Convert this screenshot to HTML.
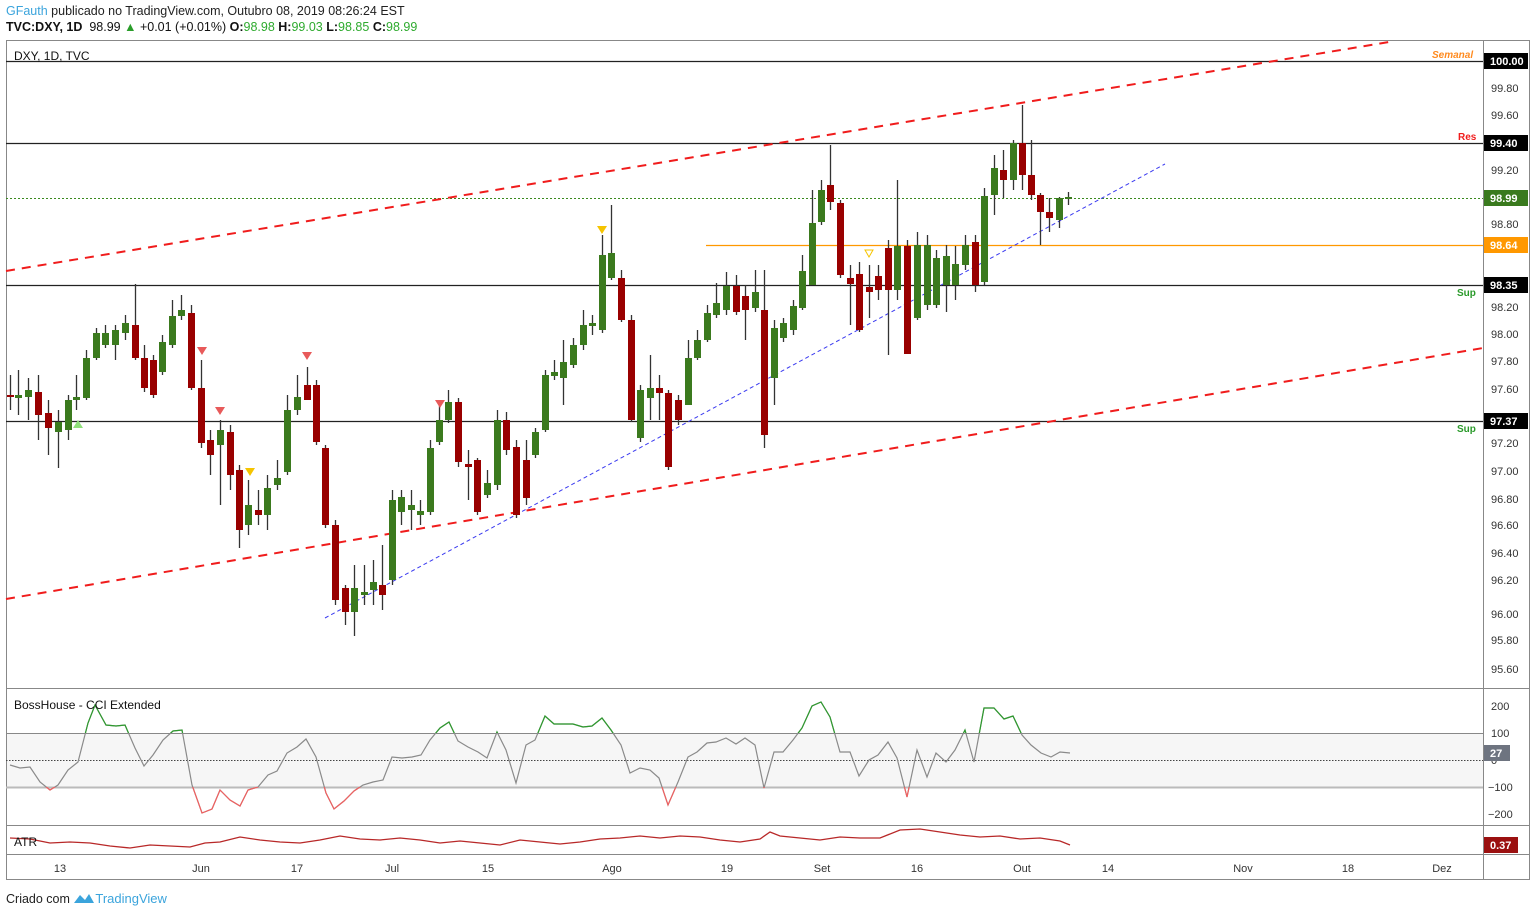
<!DOCTYPE html>
<html><head><meta charset="utf-8"><style>
body{margin:0;background:#fff;width:1536px;height:914px;overflow:hidden;font-family:"Liberation Sans",sans-serif}
.t{position:absolute;white-space:nowrap}
</style></head><body>
<div class="t" style="left:6px;top:4px;font-size:12.5px;color:#222"><span style="color:#3ba4dc">GFauth</span> publicado no TradingView.com, Outubro 08, 2019 08:26:24 EST</div>
<div class="t" style="left:6px;top:20px;font-size:12.5px;color:#111"><b>TVC:DXY, 1D</b>&nbsp; 98.99 <span style="color:#2a9d2a">▲</span> +0.01 (+0.01%) <b>O:</b><span style="color:#2eaa2e">98.98</span> <b>H:</b><span style="color:#2eaa2e">99.03</span> <b>L:</b><span style="color:#2eaa2e">98.85</span> <b>C:</b><span style="color:#2eaa2e">98.99</span></div>
<div class="t" style="left:6px;top:891px;font-size:12.5px;color:#222">Criado com <span style="color:#3ba4dc;font-size:13px"><svg width="22" height="12" viewBox="0 0 22 12" style="vertical-align:-1px"><path d="M1 11 L7 3 L12 8 L16 2 L21 11 Z" fill="#3ba4dc"/></svg>TradingView</span></div>
<svg id="c" width="1536" height="914" style="position:absolute;left:0;top:0" font-family="Liberation Sans, sans-serif">
<rect x="733" y="0" width="0" height="0"/>
<rect x="6" y="733" width="1477" height="54" fill="#f6f6f6"/>
<g stroke="#888" stroke-width="1" fill="none">
<rect x="6.5" y="40.5" width="1523" height="839"/>
<line x1="1483.5" y1="40" x2="1483.5" y2="880"/>
<line x1="6" y1="688.5" x2="1530" y2="688.5"/>
<line x1="6" y1="825.5" x2="1530" y2="825.5"/>
<line x1="6" y1="854.5" x2="1530" y2="854.5"/>
<line x1="6" y1="733.5" x2="1483" y2="733.5"/>
<line x1="6" y1="787.5" x2="1483" y2="787.5" stroke="#bbb" stroke-width="2"/>
</g>
<line x1="6" y1="760.5" x2="1483" y2="760.5" stroke="#444" stroke-dasharray="1.5,1.5"/>
<g stroke="#222" stroke-width="1.2">
<line x1="6" y1="61.5" x2="1483" y2="61.5"/>
<line x1="6" y1="143.5" x2="1483" y2="143.5"/>
<line x1="6" y1="285.5" x2="1483" y2="285.5"/>
<line x1="6" y1="421.5" x2="1483" y2="421.5"/>
</g>
<line x1="6" y1="198.5" x2="1483" y2="198.5" stroke="#3a8a1e" stroke-dasharray="2,2"/>
<line x1="706" y1="245.5" x2="1483" y2="245.5" stroke="#ff9800" stroke-width="1.3"/>
<line x1="6" y1="271" x2="1395" y2="41" stroke="#f01c1c" stroke-width="2" stroke-dasharray="9,7"/>
<line x1="6" y1="599" x2="1483" y2="348" stroke="#f01c1c" stroke-width="2" stroke-dasharray="9,7"/>
<line x1="325" y1="618" x2="1165" y2="164" stroke="#3a3af0" stroke-width="1" stroke-dasharray="4,3"/>
<g id="cd"></g>
<g id="cci"></g>
<g font-size="11" fill="#333" text-anchor="start">
<text x="1491" y="92">99.80</text><text x="1491" y="119">99.60</text><text x="1491" y="174">99.20</text><text x="1491" y="228">98.80</text><text x="1491" y="311">98.20</text><text x="1491" y="338">98.00</text><text x="1491" y="365">97.80</text><text x="1491" y="393">97.60</text><text x="1491" y="447">97.20</text><text x="1491" y="475">97.00</text><text x="1491" y="503">96.80</text><text x="1491" y="529">96.60</text><text x="1491" y="557">96.40</text><text x="1491" y="584">96.20</text><text x="1491" y="618">96.00</text><text x="1491" y="644">95.80</text><text x="1491" y="673">95.60</text>
<text x="1491" y="710">200</text><text x="1491" y="737">100</text><text x="1491" y="764">0</text><text x="1488" y="791">−100</text><text x="1488" y="818">−200</text>
</g>
<g font-size="11" fill="#333" text-anchor="middle">
<text x="60" y="872">13</text><text x="201" y="872">Jun</text><text x="297" y="872">17</text><text x="392" y="872">Jul</text><text x="488" y="872">15</text><text x="612" y="872">Ago</text><text x="727" y="872">19</text><text x="822" y="872">Set</text><text x="917" y="872">16</text><text x="1022" y="872">Out</text><text x="1108" y="872">14</text><text x="1243" y="872">Nov</text><text x="1348" y="872">18</text><text x="1442" y="872">Dez</text>
</g>
<g font-size="11" font-weight="bold" fill="#fff">
<rect x="1484" y="53" width="44" height="16" fill="#000"/><text x="1490" y="65">100.00</text>
<rect x="1484" y="135" width="44" height="16" fill="#000"/><text x="1490" y="147">99.40</text>
<rect x="1484" y="190" width="44" height="16" fill="#3a7a1e"/><text x="1490" y="202">98.99</text>
<rect x="1484" y="237" width="44" height="16" fill="#ff9800"/><text x="1490" y="249">98.64</text>
<rect x="1484" y="277" width="44" height="16" fill="#000"/><text x="1490" y="289">98.35</text>
<rect x="1484" y="413" width="44" height="16" fill="#000"/><text x="1490" y="425">97.37</text>
<rect x="1484" y="745" width="26" height="16" fill="#6e7480"/><text x="1490" y="757">27</text>
<rect x="1484" y="837" width="34" height="16" fill="#9b1010"/><text x="1490" y="849">0.37</text>
</g>
<g font-size="10" font-weight="bold" font-style="italic">
<text x="1432" y="58" fill="#ff8a1e" font-style="italic">Semanal</text>
<text x="1458" y="140" fill="#f01c1c" font-style="normal">Res</text>
<text x="1457" y="296" fill="#2a9a2a" font-style="normal">Sup</text>
<text x="1457" y="432" fill="#2a9a2a" font-style="normal">Sup</text>
</g>
<g font-size="12" fill="#111">
<text x="14" y="60">DXY, 1D, TVC</text>
<text x="14" y="709">BossHouse - CCI Extended</text>
<text x="14" y="846">ATR</text>
</g>
<g>
<path d="M197 347h10l-5 8z" fill="#e85a5a"/><path d="M215 407h10l-5 8z" fill="#e85a5a"/><path d="M302 352h10l-5 8z" fill="#e85a5a"/><path d="M435 400h10l-5 8z" fill="#e85a5a"/>
<path d="M245 468h10l-5 8z" fill="#f5c400"/><path d="M597 226h10l-5 8z" fill="#f5c400"/><path d="M865 250h8l-4 7z" fill="none" stroke="#f5c400"/>
<path d="M73 428h10l-5-8z" fill="#8fe07a"/>
</g>
</svg>
<script>
var C=[[10,395,397,375,410,0],[18,395,398,370,415,1],[28,390,397,378,420,1],[38,392,415,375,440,0],[48,413,428,400,455,0],[58,422,432,410,468,1],[68,400,430,395,440,1],[76,397,400,375,410,1],[86,358,398,350,400,1],[96,333,358,328,360,1],[105,333,345,325,348,1],[115,330,345,325,360,1],[125,323,333,315,340,1],[135,325,358,284,360,0],[144,358,388,345,392,0],[153,360,395,355,398,0],[162,342,372,335,375,1],[172,316,345,300,348,1],[181,310,316,295,320,1],[191,313,388,305,390,0],[201,388,443,360,448,0],[210,440,455,430,475,0],[220,430,445,420,505,1],[230,432,475,425,490,0],[239,470,530,465,548,0],[248,505,525,480,535,1],[258,510,515,490,525,0],[267,488,515,475,530,1],[277,478,485,460,490,1],[287,410,472,395,475,1],[297,397,410,375,415,1],[307,385,400,367,400,0],[316,385,442,380,445,0],[325,448,525,445,528,0],[335,525,600,520,605,0],[345,588,612,585,625,0],[354,588,612,565,636,1],[364,592,595,565,605,1],[373,582,590,560,605,1],[382,585,595,545,610,0],[392,500,580,490,585,1],[401,497,512,490,525,1],[411,505,510,490,530,1],[420,511,515,500,525,1],[430,448,512,440,515,1],[439,420,442,400,445,1],[448,402,420,390,423,1],[458,402,462,398,467,0],[468,464,467,450,500,0],[477,460,512,458,515,0],[487,483,495,470,498,1],[497,420,485,410,490,1],[506,420,450,412,455,0],[516,447,515,440,518,0],[526,460,498,440,505,0],[535,432,455,428,458,1],[545,375,430,370,432,1],[554,372,376,360,380,1],[563,362,378,340,405,1],[573,345,365,338,368,1],[583,325,345,310,350,1],[592,323,326,315,335,1],[602,255,330,235,333,1],[611,253,278,205,280,1],[621,278,320,270,322,0],[631,320,420,315,422,0],[640,390,438,385,442,1],[650,388,398,355,420,1],[659,388,393,375,420,0],[668,393,467,390,470,0],[678,400,420,395,425,0],[688,358,405,340,405,1],[697,340,358,330,360,1],[707,313,340,305,342,1],[716,303,315,283,318,1],[726,286,310,272,315,1],[736,286,312,275,315,0],[745,296,310,285,340,0],[755,292,308,270,312,1],[764,310,435,270,448,0],[774,328,378,320,405,1],[783,323,338,318,342,1],[793,306,330,300,335,1],[802,271,308,255,310,1],[812,223,285,190,285,1],[821,190,222,180,225,1],[830,185,202,145,210,0],[840,203,275,200,278,0],[850,278,284,265,325,0],[859,274,330,262,332,0],[869,287,292,265,318,0],[878,276,290,265,300,0],[888,248,290,240,355,0],[897,246,290,180,300,1],[907,246,354,240,354,0],[917,245,318,232,320,1],[927,245,305,235,310,1],[936,258,305,250,308,1],[946,256,285,245,312,1],[955,264,285,246,300,1],[965,245,265,235,270,1],[975,242,285,235,292,0],[984,196,282,188,285,1],[994,168,195,155,215,1],[1003,170,180,150,198,0],[1013,143,180,140,190,1],[1022,143,175,105,190,0],[1031,175,195,140,200,0],[1040,195,212,193,245,0],[1049,212,218,198,232,0],[1059,198,220,197,228,1],[1068,197,199,192,205,1]];
var s='';C.forEach(function(c){var col=c[5]?'#3b7a1e':'#990000';s+='<line x1="'+(c[0]+.5)+'" y1="'+c[3]+'" x2="'+(c[0]+.5)+'" y2="'+c[4]+'" stroke="#333" stroke-width="1.3"/><rect x="'+(c[0]-3)+'" y="'+c[1]+'" width="7" height="'+Math.max(2,c[2]-c[1])+'" fill="'+col+'"/>';});
document.getElementById('cd').innerHTML=s;
var P="10,765 20,768 30,767 40,782 50,790 58,785 68,770 78,762 88,723 95,705 106,725 116,726 125,725 135,748 144,766 153,755 163,740 173,731 182,730 192,785 202,813 212,809 220,790 230,800 240,806 248,790 258,787 268,775 277,771 287,753 297,747 306,739 316,757 326,793 334,809 344,801 354,791 363,785 373,782 383,780 392,757 402,758 412,757 421,755 430,740 440,728 449,722 458,741 468,747 478,752 487,758 497,732 506,750 516,783 526,745 535,740 545,716 554,724 563,724 573,724 583,727 592,726 602,718 611,730 621,745 630,773 640,768 650,770 659,778 668,805 678,782 688,757 697,752 707,743 716,742 726,738 736,744 745,738 755,745 764,788 774,752 783,752 793,740 802,728 812,706 821,702 830,717 840,752 850,752 859,776 869,760 878,755 888,742 897,758 907,797 917,750 927,777 936,753 946,762 955,750 965,730 974,762 984,708 994,708 1004,719 1013,716 1022,735 1031,745 1041,753 1051,757 1060,752 1070,753";
var A="10,838 30,839 50,843 70,842 90,843 110,846 130,848 150,845 170,846 190,847 205,843 220,842 240,837 260,840 280,842 300,843 320,840 340,836 360,839 380,840 400,838 420,840 440,843 460,841 480,843 500,845 520,840 540,842 560,844 580,842 600,839 620,838 640,836 660,838 680,836 700,837 720,840 740,842 760,839 770,832 780,836 800,838 820,840 840,837 860,838 880,838 900,830 920,829 940,832 960,835 980,837 1000,836 1020,839 1040,838 1060,841 1070,845";
document.getElementById('cci').innerHTML='<defs><clipPath id="g"><rect x="0" y="680" width="1483" height="53"/></clipPath><clipPath id="r"><rect x="0" y="787" width="1483" height="40"/></clipPath></defs><polyline points="'+P+'" fill="none" stroke="#8a8a8a" stroke-width="1.2"/><polyline points="'+P+'" fill="none" stroke="#2e9a2e" stroke-width="1.2" clip-path="url(#g)"/><polyline points="'+P+'" fill="none" stroke="#f06060" stroke-width="1.2" clip-path="url(#r)"/><polyline points="'+A+'" fill="none" stroke="#b82828" stroke-width="1.3"/>';
</script>
</body></html>
